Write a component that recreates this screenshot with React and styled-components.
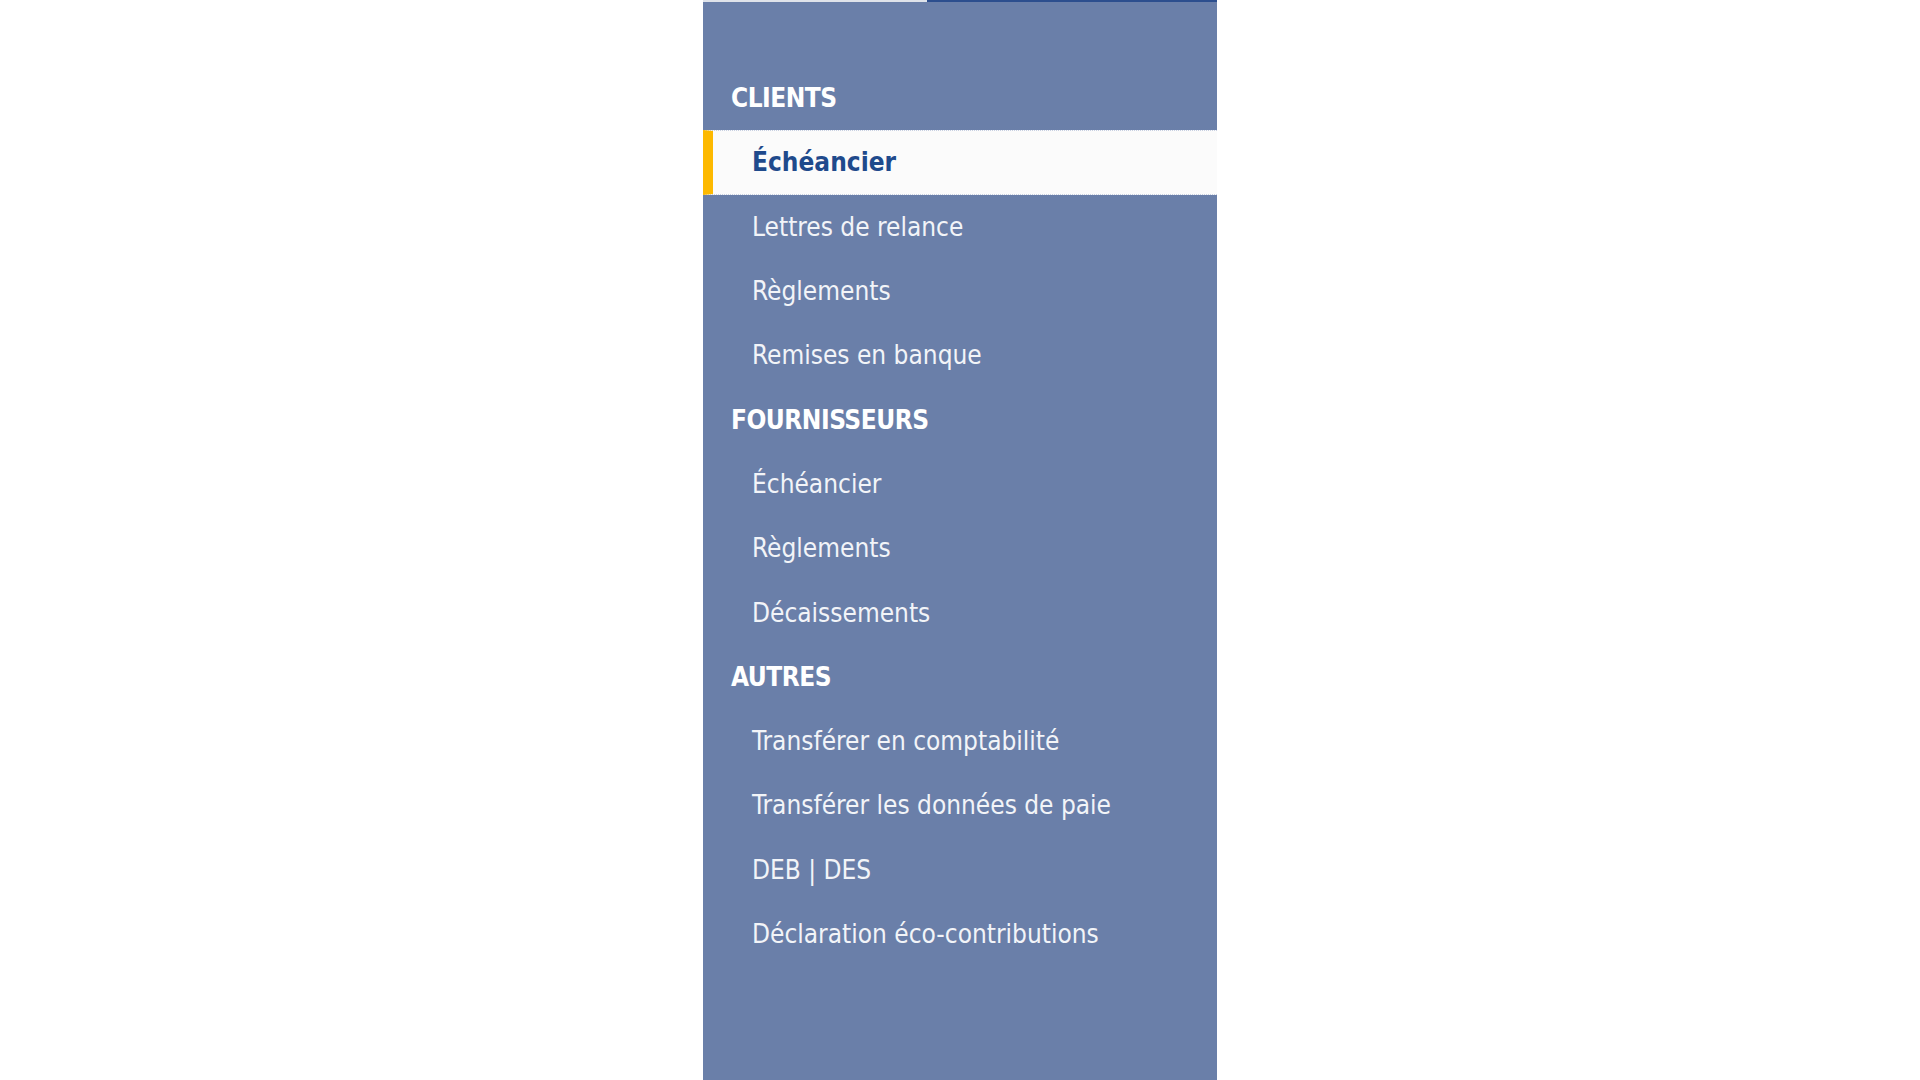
import { Fragment } from "react";
import styled, { createGlobalStyle } from "styled-components";

const GlobalStyle = createGlobalStyle`
  html, body {
    margin: 0;
    padding: 0;
    background: #ffffff;
  }
  #root {
    min-height: 100vh;
  }
`;

const Page = styled.div`
  display: flex;
  justify-content: center;
  min-height: 100vh;
`;

const Sidebar = styled.nav`
  width: 514px;
  min-height: 100vh;
  background: #6a7fa9;
  display: flex;
  flex-direction: column;
  font-family: "DejaVu Sans Condensed", "DejaVu Sans", sans-serif;
`;

const TopLine = styled.div`
  display: flex;
  height: 2px;
  margin-bottom: 64px;
`;

const TopSegment = styled.div`
  height: 100%;
  width: ${(p) => p.$width};
  flex: ${(p) => (p.$width ? "none" : "1")};
  background: ${(p) => p.$color};
`;

const Menu = styled.ul`
  list-style: none;
  margin: 0;
  padding: 0;
  display: flex;
  flex-direction: column;
`;

const SectionTitle = styled.li`
  height: 64.3px;
  display: flex;
  align-items: center;
  padding-left: 28px;
  color: #ffffff;
  font-size: 26px;
  font-weight: 700;
  letter-spacing: -0.5px;
`;

const Item = styled.li`
  height: 64.3px;
  box-sizing: border-box;
  display: flex;
  align-items: center;
  padding-left: 39px;
  font-size: 26px;
  font-weight: ${(p) => (p.$active ? 700 : 400)};
  color: ${(p) => (p.$active ? "#1f4a8c" : "#f2f4f8")};
  background: ${(p) => (p.$active ? "#fbfbfb" : "transparent")};
  border-left: 10px solid ${(p) => (p.$active ? "#fdb900" : "transparent")};
  border-top: 1px dotted ${(p) => (p.$active ? "#c9d1e2" : "transparent")};
  border-bottom: 1px dotted ${(p) => (p.$active ? "#c9d1e2" : "transparent")};
  cursor: pointer;
`;

const sections = [
  {
    title: "CLIENTS",
    items: ["Échéancier", "Lettres de relance", "Règlements", "Remises en banque"],
  },
  {
    title: "FOURNISSEURS",
    items: ["Échéancier", "Règlements", "Décaissements"],
  },
  {
    title: "AUTRES",
    items: [
      "Transférer en comptabilité",
      "Transférer les données de paie",
      "DEB | DES",
      "Déclaration éco-contributions",
    ],
  },
];

export default function App() {
  return (
    <>
      <GlobalStyle />
      <Page>
        <Sidebar>
          <TopLine>
            <TopSegment $width="224px" $color="#dfe3ea" />
            <TopSegment $color="#2c4e8e" />
          </TopLine>
          <Menu>
            {sections.map((section, si) => (
              <Fragment key={section.title}>
                <SectionTitle>{section.title}</SectionTitle>
                {section.items.map((label, i) => (
                  <Item key={`${si}-${i}`} $active={si === 0 && i === 0}>
                    {label}
                  </Item>
                ))}
              </Fragment>
            ))}
          </Menu>
        </Sidebar>
      </Page>
    </>
  );
}
